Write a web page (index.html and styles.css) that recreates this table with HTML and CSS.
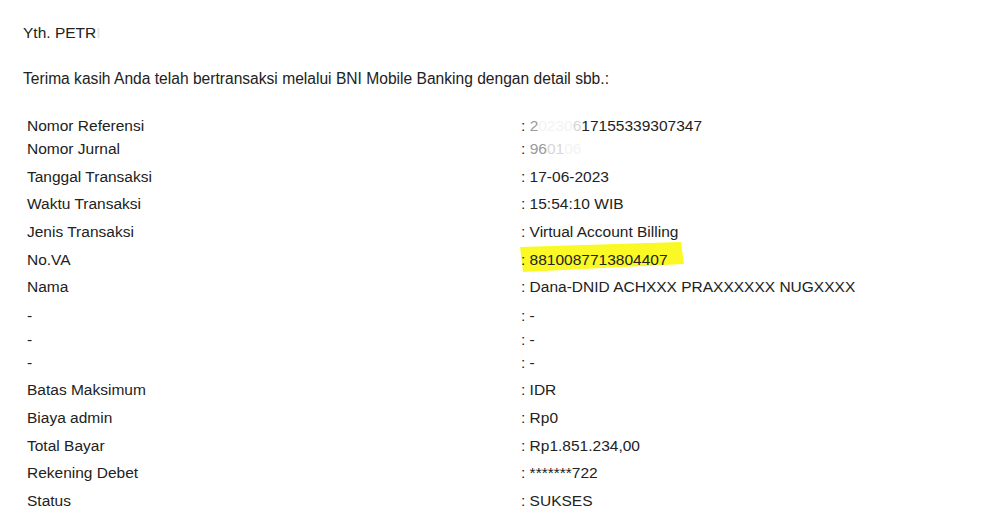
FILE: index.html
```html
<!DOCTYPE html>
<html lang="id">
<head>
<meta charset="utf-8">
<title>BNI Mobile Banking</title>
<link rel="stylesheet" href="styles.css">
</head>
<body>
<div class="mail">
  <p class="greet">Yth. PETR<span class="erased-part">I</span></p>
  <p class="intro">Terima kasih Anda telah bertransaksi melalui BNI Mobile Banking dengan detail sbb.:</p>
  <div class="detail">
    <div class="row tight"><span class="label">Nomor Referensi</span><span class="value">: <span class="faint">2</span><span class="erased">0230</span><span class="ghost">6</span>17155339307347</span></div>
    <div class="row"><span class="label">Nomor Jurnal</span><span class="value">: <span class="faint">96</span><span class="ghost">01</span><span class="erased">06</span></span></div>
    <div class="row"><span class="label">Tanggal Transaksi</span><span class="value">: 17-06-2023</span></div>
    <div class="row"><span class="label">Waktu Transaksi</span><span class="value">: 15:54:10 WIB</span></div>
    <div class="row"><span class="label">Jenis Transaksi</span><span class="value">: Virtual Account Billing</span></div>
    <div class="row"><span class="label">No.VA</span><span class="value marked"><svg class="marker" width="170" height="34" viewBox="0 0 170 34"><polygon points="3,7 164,2 167,24 6,32" fill="#fbf925"/></svg><span class="mark-text">: 8810087713804407</span></span></div>
    <div class="row wide"><span class="label">Nama</span><span class="value">: Dana-DNID ACHXXX PRAXXXXXX NUGXXXX</span></div>
    <div class="row tight"><span class="label">-</span><span class="value">: -</span></div>
    <div class="row tight2"><span class="label">-</span><span class="value">: -</span></div>
    <div class="row"><span class="label">-</span><span class="value">: -</span></div>
    <div class="row"><span class="label">Batas Maksimum</span><span class="value">: IDR</span></div>
    <div class="row"><span class="label">Biaya admin</span><span class="value">: Rp0</span></div>
    <div class="row"><span class="label">Total Bayar</span><span class="value">: Rp1.851.234,00</span></div>
    <div class="row"><span class="label">Rekening Debet</span><span class="value">: *******722</span></div>
    <div class="row"><span class="label">Status</span><span class="value">: SUKSES</span></div>
  </div>
</div>
</body>
</html>
```

FILE: styles.css
```css
html, body {
  margin: 0;
  padding: 0;
  background: #ffffff;
}
body {
  width: 1002px;
  height: 523px;
  overflow: hidden;
  font-family: "Liberation Sans", Arial, sans-serif;
  font-size: 15.5px;
  color: #222222;
}
.mail {
  padding: 24px 0 0 23px;
}
.greet, .intro {
  margin: 0;
  line-height: 18px;
}
.intro {
  margin-top: 28px;
  font-size: 15.6px;
}
.detail {
  margin-top: 28.7px;
  padding-left: 4px;
  display: flex;
  flex-direction: column;
}
.row {
  display: grid;
  grid-template-columns: 494px 1fr;
  line-height: 18px;
  padding-bottom: 9.7px;
}
.row.tight {
  padding-bottom: 5.3px;
}
.row.tight2 {
  padding-bottom: 5px;
}
.row.wide {
  padding-bottom: 11px;
}
.value {
  white-space: nowrap;
}
.marked {
  position: relative;
}
.marker {
  position: absolute;
  left: -4px;
  top: -11px;
}
.mark-text {
  position: relative;
}
.faint {
  color: #9a9a9a;
}
.ghost {
  color: #d6d6d6;
}
.erased {
  color: #f3f3f3;
}
.erased-part {
  color: #e2e2e2;
}
```
